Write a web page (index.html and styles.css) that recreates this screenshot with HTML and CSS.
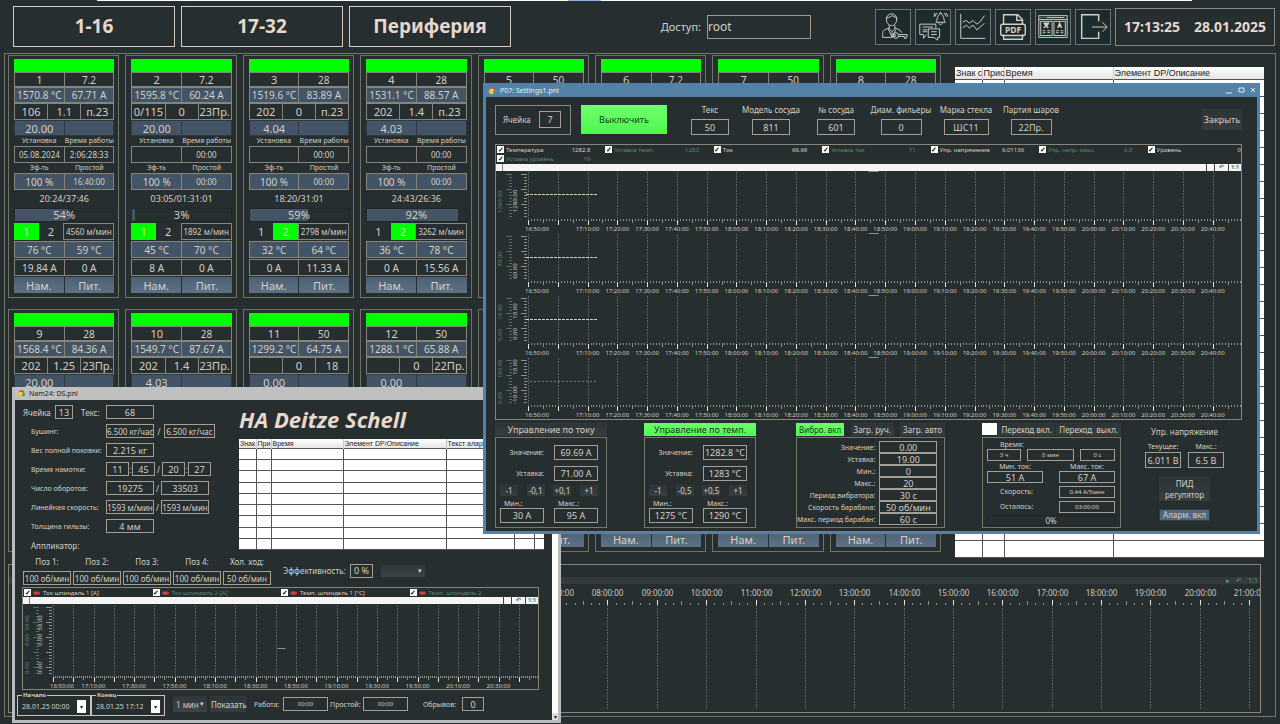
FILE: index.html
```html
<!DOCTYPE html>
<html lang="ru">
<head>
  <meta charset="UTF-8">
  <title>Периферия</title>
  <meta name="viewport" content="width=device-width, initial-scale=1.0">
  <link rel="stylesheet" href="styles.css">
</head>
<body>

  <div class="top-strip"></div>

  <header class="header">
    <nav class="pages">
      <button class="page-btn">1-16</button>
      <button class="page-btn">17-32</button>
      <button class="page-btn">Периферия</button>
    </nav>

    <div class="access">
      <label for="access">Доступ:</label>
      <input id="access" type="text" value="root">
    </div>

    <div class="tools">
      <button class="tool" aria-label="user">
        <svg viewBox="0 0 36 36">
          <path d="M11 10c0-8 11-8 11 0M11 8c3 1 5-2 6-2s3 2 5 2M11 9c0 10 11 10 11 0"/>
          <path d="M14 16v4l3 3 3-3v-4M14 19l-5 2c-2 1-2 3-2 8h10M20 19l5 2 2 3M13 20l4 9 4-8M17 23v5"/>
          <circle cx="21" cy="27" r="3"/><circle cx="20" cy="27" r="1"/>
          <path d="M24 26h9v2h-1v2h-2v-2h-6"/>
        </svg>
      </button>
      <button class="tool" aria-label="messages">
        <svg viewBox="0 0 36 36">
          <path d="M4 15h17v4M4 15v11h4v4l3-4M7 18h11M7 21h5M7 23h5"/>
          <path d="M13 20h12v9h-2v3l-4-3h-6zM16 23h6M16 26h6"/>
          <path d="M21 13c2-2 1-8 5-9 4 1 3 7 5 9zM25 4c0-2 2-2 2 0M24 14c1 2 3 2 4 0M22 3l-2 4M20 3l-1 4M30 3l2 4M32 3l2 4"/>
        </svg>
      </button>
      <button class="tool" aria-label="trends">
        <svg viewBox="0 0 36 36">
          <path d="M5 4v26h26"/>
          <path d="M7 13l4-2 3 3 4-3 4 4 4-3 4-6M7 19l4-3 3 3 4-3 4 5 4-3 4-4"/>
        </svg>
      </button>
      <button class="tool" aria-label="pdf">
        <svg viewBox="0 0 36 36">
          <path class="thick" d="M8 15V5h15l5 5v5M22 5v6h6M8 26v5h20v-5"/>
          <rect class="thick" x="5" y="15" width="26" height="12" rx="2"/>
          <text x="18" y="24">PDF</text>
        </svg>
      </button>
      <button class="tool" aria-label="language">
        <svg viewBox="0 0 36 36">
          <rect x="3" y="6" width="30" height="23"/>
          <path d="M3 10h30M5 8h1M8 8h1M11 8h19"/>
          <rect x="5" y="12" width="12" height="15"/><rect x="19" y="12" width="12" height="15"/>
          <path class="thick" d="M8 14h6M11 14v2M13 15l-5 4M9 15l4 4M23 19l2-5 2 5M24 17h3"/>
          <path d="M7 22h3M12 22h3M7 24h3M12 24h3M21 22h3M26 22h3M21 24h3M26 24h3"/>
        </svg>
      </button>
      <button class="tool" aria-label="exit">
        <svg viewBox="0 0 36 36">
          <path class="thick" d="M24 12V5H6v25h18v-7"/>
          <path d="M17 18h16M28 13l5 5-5 5"/>
        </svg>
      </button>
    </div>

    <div class="clock"><span>17:13:25</span><span>28.01.2025</span></div>
  </header>

  <main class="frame">
    <div class="overview">
      <div class="cards" id="cards"></div>
      <table class="alarms alarms-main">
        <colgroup><col class="c26"><col class="c22"><col class="c109"><col></colgroup>
        <thead>
          <tr><th>Знак с</th><th>Прио</th><th>Время</th><th>Элемент DP/Описание</th></tr>
        </thead>
        <tbody data-rows="28" data-cols="4"></tbody>
      </table>
    </div>

    <section class="history">
      <div class="history-bar"><i>▸</i><i>↶</i><i>1:1</i></div>
      <svg class="plot" data-plot="history"></svg>
    </section>
  </main>

  <!-- Winding panel -->
  <section class="window win-wind">
    <div class="title-bar">
      <svg class="logo" viewBox="0 0 10 10"><circle class="l1" cx="5" cy="4" r="3"/><circle class="l2" cx="4" cy="6" r="3"/><circle class="l3" cx="7" cy="6" r="2"/><circle class="l4" cx="5" cy="5" r="1"/></svg>
      <span>Nam24: DS.pnl</span>
    </div>
    <div class="wind-body">
      <div class="wind-content">
        <div class="wind-top">
          <form class="wind-form">
            <div class="line line-first">
              <label for="w-cell">Ячейка</label><input id="w-cell" class="box w18" value="13">
              <label for="w-tex" class="tex">Текс:</label><input id="w-tex" class="box w48" value="68">
            </div>
            <div class="line"><label for="w-bush">Бушинг:</label><input id="w-bush" class="box small w48" value="6.500 кг/час"><span class="sep wide">/</span><input class="box small w51" aria-label="Бушинг" value="6.500 кг/час"></div>
            <div class="line"><label for="w-weight">Вес полной поковки:</label><input id="w-weight" class="box w48" value="2.215 кг"></div>
            <div class="line"><label for="w-time">Время намотки:</label><input id="w-time" class="box w23" value="11"><span class="colon">:</span><input class="box w23" aria-label="мин" value="45"><span class="sep">/</span><input class="box w23" aria-label="ч" value="20"><span class="colon">:</span><input class="box w23" aria-label="мин" value="27"></div>
            <div class="line"><label for="w-turns">Число оборотов:</label><input id="w-turns" class="box w48" value="19275"><span class="sep">/</span><input class="box w48" aria-label="Число оборотов" value="33503"></div>
            <div class="line"><label for="w-speed">Линейная скорость:</label><input id="w-speed" class="box small w48" value="1593 м/мин"><span class="sep">/</span><input class="box small w48" aria-label="Линейная скорость" value="1593 м/мин"></div>
            <div class="line"><label for="w-thick">Толщина гильзы:</label><input id="w-thick" class="box w48" value="4 мм"></div>
            <div class="line applicator">Аппликатор:</div>
          </form>
          <div class="wind-alarms">
            <h1>HA Deitze Schell</h1>
            <table class="alarms alarms-small">
              <colgroup><col class="c17"><col class="c15"><col class="c72"><col class="c103"><col class="c68"><col class="c20"><col></colgroup>
              <thead>
                <tr><th>Знак</th><th>При</th><th>Время</th><th>Элемент DP/Описание</th><th>Текст аларма</th><th></th><th></th></tr>
              </thead>
              <tbody data-rows="9" data-cols="7"></tbody>
            </table>
          </div>
        </div>

        <div class="positions">
          <div class="pos-grid">
            <label>Поз 1:<input class="box small" value="100 об/мин"></label>
            <label>Поз 2:<input class="box small" value="100 об/мин"></label>
            <label>Поз 3:<input class="box small" value="100 об/мин"></label>
            <label>Поз 4:<input class="box small" value="100 об/мин"></label>
            <label>Хол. ход:<input class="box small" value="50 об/мин"></label>
          </div>
          <label for="w-eff" class="eff">Эффективность:</label>
          <input id="w-eff" class="box w23" value="0 %">
          <span class="pick"><select aria-label="Режим"><option></option></select></span>
        </div>

        <div class="trend trend-wind">
          <div class="legend legend-wind">
            <label><input type="checkbox" checked><b>⚮</b>Ток шпиндель 1 [A]</label>
            <label class="dim"><input type="checkbox" checked><b>⚮</b>Ток шпиндель 2 [A]</label>
            <label><input type="checkbox" checked><b>⚮</b>Темп. шпиндель 1 [°C]</label>
            <label class="dim"><input type="checkbox" checked><b>⚮</b>Темп. шпиндель 2</label>
          </div>
          <div class="scroll-strip"><i></i><i></i><i>↶</i><i>1:1</i></div>
          <svg class="plot plot-wind" data-plot="wind"></svg>
        </div>

        <div class="wind-foot">
          <fieldset><legend>Начало</legend><input aria-label="Начало" value="28.01.25 00:00"><button type="button" aria-label="Выбрать начало">▾</button></fieldset>
          <fieldset><legend>Конец</legend><input aria-label="Конец" value="28.01.25 17:12"><button type="button" aria-label="Выбрать конец">▾</button></fieldset>
          <span class="pick pick-step"><select aria-label="Интервал"><option>1 мин</option></select></span>
          <button type="button" class="btn show">Показать</button>
          <label for="w-work">Работа:</label><input id="w-work" class="box w45" value="00:00">
          <label for="w-idle">Простой:</label><input id="w-idle" class="box w45" value="00:00">
          <label for="w-breaks" class="breaks">Обрывов:</label><input id="w-breaks" class="box w22" value="0">
        </div>
      </div>
      <div class="scrollbar"><button type="button" aria-label="Вниз">▾</button></div>
    </div>
  </section>

  <!-- Heating settings panel -->
  <section class="window win-settings">
    <div class="title-bar">
      <svg class="logo" viewBox="0 0 10 10"><circle class="l1" cx="5" cy="4" r="3"/><circle class="l2" cx="4" cy="6" r="3"/><circle class="l3" cx="7" cy="6" r="2"/><circle class="l4" cx="5" cy="5" r="1"/></svg>
      <span>P07: Settings1.pnl</span>
      <div class="win-buttons">
        <button aria-label="Свернуть"><svg viewBox="0 0 8 8"><path d="M1 7h6"/></svg></button>
        <button aria-label="Развернуть"><svg viewBox="0 0 8 8"><path d="M2 2h5v4H2z"/></svg></button>
        <button aria-label="Закрыть окно"><svg viewBox="0 0 8 8"><path d="M2 2l4 4M6 2L2 6"/></svg></button>
      </div>
    </div>
    <div class="set-body">
      <div class="set-head">
        <div class="cell-no"><label for="s-cell">Ячейка</label><input id="s-cell" class="box" value="7"></div>
        <button class="off-btn">Выключить</button>
        <div class="params">
          <label>Текс<input class="box w38" value="50"></label>
          <label>Модель сосуда<input class="box w38" value="811"></label>
          <label>№ сосуда<input class="box w38" value="601"></label>
          <label>Диам. фильеры<input class="box w41" value="0"></label>
          <label>Марка стекла<input class="box w45" value="ШС11"></label>
          <label>Партия шаров<input class="box w41" value="22Пр."></label>
        </div>
        <button class="btn close-btn">Закрыть</button>
      </div>

      <div class="trend">
        <div class="legend legend-set">
          <label><input type="checkbox" checked>Температура<span>1282.8</span></label>
          <label class="dim"><input type="checkbox" checked>Уставка темп.<span>1283</span></label>
          <label><input type="checkbox" checked>Ток<span>69.69</span></label>
          <label class="dim"><input type="checkbox" checked>Уставка ток<span>71</span></label>
          <label><input type="checkbox" checked>Упр. напряжение<span>6.01136</span></label>
          <label class="dim"><input type="checkbox" checked>Упр. напр. макс.<span>6.5</span></label>
          <label class="last"><input type="checkbox" checked>Уровень<span>0</span></label>
          <label class="dim"><input type="checkbox" checked>Уставка уровень<span>19</span></label>
        </div>
        <div class="scroll-strip"><i></i><i></i><i>↶</i><i>1:1</i></div>
        <svg class="plot plot-set" data-plot="temp"></svg>
        <svg class="plot plot-set" data-plot="current"></svg>
        <svg class="plot plot-set" data-plot="voltage"></svg>
        <svg class="plot plot-set" data-plot="level"></svg>
      </div>

      <div class="controls">
        <section class="control control-reg">
          <button class="btn head-btn">Управление по току</button>
          <div class="panel reg">
            <label for="c-val">Значение:</label><input id="c-val" class="box" value="69.69 A">
            <label for="c-set">Уставка:</label><input id="c-set" class="box" value="71.00 A">
            <div class="steps"><button class="btn">-1</button><button class="btn">-0,1</button><button class="btn">+0,1</button><button class="btn">+1</button></div>
            <label class="limit">Мин.:<input class="box" value="30 A"></label>
            <label class="limit">Макс.:<input class="box" value="95 A"></label>
          </div>
        </section>

        <section class="control control-reg">
          <button class="btn head-btn on">Управление по темп.</button>
          <div class="panel reg">
            <label for="t-val">Значение:</label><input id="t-val" class="box" value="1282.8 °C">
            <label for="t-set">Уставка:</label><input id="t-set" class="box" value="1283 °C">
            <div class="steps"><button class="btn">-1</button><button class="btn">-0,5</button><button class="btn">+0,5</button><button class="btn">+1</button></div>
            <label class="limit">Мин.:<input class="box" value="1275 °C"></label>
            <label class="limit">Макс.:<input class="box" value="1290 °C"></label>
          </div>
        </section>

        <section class="control control-vibro">
          <div class="head-row"><button class="btn on">Вибро. вкл</button><button class="btn">Загр. руч.</button><button class="btn">Загр. авто</button></div>
          <div class="panel vibro">
            <label for="v1">Значение:</label><input id="v1" class="box" value="0.00">
            <label for="v2">Уставка:</label><input id="v2" class="box" value="19.00">
            <label for="v3">Мин.:</label><input id="v3" class="box" value="0">
            <label for="v4">Макс.:</label><input id="v4" class="box" value="20">
            <label for="v5">Период вибратора:</label><input id="v5" class="box" value="30 с">
            <label for="v6">Скорость барабана:</label><input id="v6" class="box" value="50 об/мин">
            <label for="v7">Макс. период барабан:</label><input id="v7" class="box" value="60 с">
          </div>
        </section>

        <section class="control control-ramp">
          <div class="head-row"><span class="lamp"></span><button class="btn">Переход вкл.</button><button class="btn">Переход&nbsp; выкл.</button></div>
          <div class="panel ramp">
            <label for="r-h">Время:</label>
            <div class="time"><input id="r-h" class="box" value="3 ч"><input class="box" aria-label="мин" value="0 мин"><input class="box" aria-label="с" value="0 с"></div>
            <div class="pair"><label>Мин. ток:<input class="box" value="51 A"></label><label>Макс. ток:<input class="box" value="67 A"></label></div>
            <div class="rate"><label for="r-speed">Скорость:</label><input id="r-speed" class="box" value="0.44 A/5мин"></div>
            <div class="rate"><label for="r-left">Осталось:</label><input id="r-left" class="box" value="03:00:00"></div>
            <div class="ramp-progress">0%</div>
          </div>
        </section>

        <section class="control-volt">
          <h2>Упр. напряжение</h2>
          <div class="volts"><label>Текущее:<input class="box" value="6.011 В"></label><label>Макс.:<input class="box" value="6.5 В"></label></div>
          <button class="btn pid">ПИД регулятор</button>
          <button class="btn alarm-on">Аларм. вкл</button>
        </section>
      </div>
    </div>
  </section>

  <script src="script.js"></script>
</body>
</html>
```
FILE: styles.css
```css
* { box-sizing: border-box; }

body {
  margin: 0;
  min-height: 100vh;
  display: flex;
  flex-direction: column;
  position: relative;
  overflow: hidden;
  background-color: #262e2f;
  color: #d6cec4;
  font-family: 'Noto Sans', sans-serif;
  font-size: 8px;
}

button, input, select {
  font: inherit;
  color: inherit;
  margin: 0;
  padding: 0;
  border: none;
  border-radius: 0;
  background: none;
  min-width: 0;
}

button { white-space: nowrap; cursor: pointer; }

.top-strip {
  height: 1px;
  margin: 0 88px 0 97px;
  background: linear-gradient(90deg, #fff 43%, #8db4dc 43%, #8db4dc 46%, #fff 46%);
}

/* Header */
.header {
  display: flex;
  align-items: center;
  padding: 5px 5px 6px 13px;
}

.pages { display: flex; gap: 6px; }

.page-btn {
  width: 162px;
  height: 41px;
  border: 1px solid #d9cbbf;
  color: #e6d8cd;
  font-size: 19px;
  font-weight: bold;
  line-height: 37px;
}

.access {
  display: flex;
  align-items: center;
  gap: 6px;
  margin: 0 64px 0 auto;
  font-size: 12px;
}

.access label { font-size: 11px; }

.access input {
  width: 104px;
  height: 24px;
  border: 1px solid #a09c95;
}

.tools { display: flex; gap: 4px; margin-right: 4px; }

.tool {
  width: 36px;
  height: 36px;
  border: 1px solid #6d7474;
  background-color: #1c2c2e;
}

.tool svg { display: block; width: 34px; height: 34px; }
.tool path, .tool rect, .tool circle { fill: none; stroke: #d6cec4; stroke-width: 1; }
.tool .thick { stroke-width: 1.5; }
.tool text { fill: #d6cec4; font-size: 9px; font-weight: bold; text-anchor: middle; }

.clock {
  display: flex;
  align-items: center;
  justify-content: center;
  gap: 14px;
  width: 160px;
  height: 38px;
  border: 1px solid #8b8880;
  color: #e6d8cd;
  font-size: 14px;
  font-weight: bold;
}

/* Main frame */
.frame {
  flex: 1;
  display: flex;
  flex-direction: column;
  margin: 0 4px 7px;
  padding: 1px 11px 3px 3px;
  border: 1px solid #73776d;
}

.overview {
  display: grid;
  grid-template-columns: minmax(0, 933fr) minmax(0, 309fr);
  gap: 14px;
  align-items: start;
}

.cards {
  display: grid;
  grid-template-columns: repeat(8, minmax(0, 1fr));
  gap: 11px 6px;
}

.card {
  display: flex;
  flex-direction: column;
  padding: 3px 4px 4px 5px;
  border: 1px solid #6c7564;
  text-align: center;
}

.state { height: 13px; background-color: #0f0; }

.row { display: flex; height: 17px; font-size: 10px; }

.row > * {
  flex: 1 1 0;
  min-width: 0;
  display: flex;
  align-items: center;
  justify-content: center;
  border: 1px solid #85857b;
  white-space: nowrap;
  overflow: hidden;
}

.row > * + * { border-left: none; }
.row-id { height: 15px; }
.row-id :first-child { font-size: 11px; }
.row-power { height: 16px; }
.row-glass { font-size: 11px; }
.blue > * { background-color: #425466; }
.row-level { height: 16px; font-size: 11px; }
.row-level > * { border-color: #2c3842; }
.captions { display: flex; height: 10px; align-items: center; font-size: 7px; line-height: 10px; }
.captions span { flex: 1 1 0; white-space: nowrap; }
.row-small { font-size: 8px; }
.row-eff :last-child { font-size: 8px; }
.elapsed { height: 18px; line-height: 18px; font-size: 9px; }

.progress {
  position: relative;
  height: 14px;
  margin-bottom: 1px;
  border: 1px solid #1f2728;
  font-size: 11px;
  line-height: 12px;
}

.progress div { position: absolute; top: 0; bottom: 0; left: 0; background-color: #425466; }
.progress span { position: relative; }

.row-spin { margin-bottom: 1px; font-size: 11px; }
.row-spin .spindle { flex: 1; border: none; }
.row-spin .spindle.active { background-color: #0f0; }
.row-spin .speed { flex: 2; border: 1px solid #85857b; font-size: 8px; }
.row-temp, .row-amps { margin-bottom: 1px; }

.card-buttons { display: flex; height: 16px; gap: 1px; }
.card-buttons button {
  flex: 1;
  background: linear-gradient(#4d6073, #5d7287);
  font-size: 11px;
  line-height: 15px;
}

/* Alarm tables */
.alarms {
  width: 100%;
  table-layout: fixed;
  border-collapse: collapse;
  background-color: #fff;
  color: #222;
}

.alarms th {
  padding: 0 0 0 1px;
  border-right: 1px solid #ccc;
  font-weight: normal;
  text-align: left;
  white-space: nowrap;
  overflow: hidden;
  background: linear-gradient(#fff, #e4e4e4);
}

.alarms td { padding: 0; border: 1px solid #555; border-width: 1px 1px 1px 0; }
.alarms th:last-child, .alarms td:last-child { border-right: none; }
.alarms-main { height: 491px; margin-top: 12px; font-family: 'Liberation Sans', sans-serif; font-size: 9px; }
.alarms-main th { height: 12px; line-height: 12px; }
.alarms-small { height: 111px; font-family: 'Liberation Sans', sans-serif; font-size: 7px; }
.alarms-small th { height: 9px; line-height: 9px; }
.c26 { width: 27px; } .c22 { width: 22px; } .c109 { width: 109px; }
.c17 { width: 17px; } .c15 { width: 15px; } .c72 { width: 72px; }
.c103 { width: 103px; } .c68 { width: 68px; } .c20 { width: 20px; }

/* Trends */
.history {
  flex: 1;
  display: flex;
  flex-direction: column;
  min-height: 149px;
  margin: 6px 3px 0 0;
  padding-top: 12px;
  border: 1px solid #85857b;
}

.history-bar {
  display: flex;
  justify-content: flex-end;
  gap: 6px;
  height: 7px;
  padding-right: 2px;
  background-color: #343b3d;
  color: #4aa394;
  line-height: 7px;
}

.history-bar i { font-style: normal; font-size: 7px; }

.plot { display: block; width: 100%; overflow: hidden; }
.history .plot { flex: 1 1 0; height: 0; min-height: 0; }
.plot text { fill: #cfc8be; font-size: 6px; text-anchor: middle; }
.plot .big { font-size: 8px; }
.plot .green { fill: #5b8872; }
.plot .grid { stroke: #566060; stroke-width: 1; stroke-dasharray: 2 1; }
.plot .tick { stroke: #8f8f88; stroke-width: 1; }
.plot .major { stroke: #ebe4da; stroke-width: 1; }
.plot .gtick { stroke: #4e6f5f; stroke-width: 1; }
.plot .curve { stroke: #d9d6b8; stroke-width: 1; stroke-dasharray: 3 1; }
.plot .faint { stroke: #777d78; stroke-dasharray: 2 2; }

.trend { border: 1px solid #85857b; }
.trend-wind { margin: 0 5px; }

.legend { display: grid; font-size: 6px; }
.legend label { display: flex; align-items: center; white-space: nowrap; }
.legend span { margin-left: auto; padding-right: 15px; }
.legend .last span { padding-right: 0; }
.legend .dim { color: #5b8872; }
.legend b { color: #e04848; font-size: 8px; line-height: 8px; margin-right: 3px; }
.legend-wind { grid-template-columns: repeat(4, 131fr); height: 9px; padding-left: 1px; }
.legend-set { grid-template-columns: repeat(6, 109fr) 94fr; grid-auto-rows: 9px; padding: 0 0 1px 1px; }

.legend input {
  appearance: none;
  flex: none;
  width: 7px;
  height: 7px;
  margin-right: 2px;
  background-color: #fff;
}

.legend input:checked::before {
  content: "✓";
  display: block;
  color: #111;
  font-size: 7px;
  font-weight: bold;
  line-height: 7px;
  text-align: center;
}

.scroll-strip {
  display: flex;
  justify-content: flex-end;
  gap: 1px;
  height: 7px;
  background-color: #f5f5f5;
  color: #2f8f80;
  font-size: 6px;
  font-weight: bold;
  line-height: 7px;
}

.scroll-strip i { width: 13px; border-left: 1px solid #444; font-style: normal; text-align: center; }
.scroll-strip i:first-child { width: 7px; margin-right: auto; border-left: none; border-right: 1px solid #888; }
.scroll-strip i:nth-child(2) { width: 7px; }

/* Windows */
.window { position: absolute; background-color: #262e2f; }
.title-bar { display: flex; align-items: center; gap: 3px; font-size: 7px; }
.logo { width: 9px; height: 9px; margin-left: 2px; }
.l1 { fill: #d6503c; } .l2 { fill: #efc53c; } .l3 { fill: #4fa05a; } .l4 { fill: #f7efc0; }

.box {
  height: 14px;
  border: 1px solid #a39f96;
  text-align: center;
  font-size: 9px;
}

.box.small { font-size: 8px; }

.btn { background: linear-gradient(#2d3436, #383e40); border: 1px solid #323a3b; }
.btn.on { background: linear-gradient(#6dff6d, #4cf84c); border-color: #5fff5f; color: #1d3a1f; }

.w18 { width: 18px; } .w22 { width: 22px; } .w23 { width: 23px; } .w38 { width: 38px; }
.w41 { width: 41px; } .w45 { width: 45px; } .w48 { width: 48px; } .w51 { width: 51px; }

/* Winding window */
.win-wind {
  left: 12px;
  top: 387px;
  width: 549px;
  border: 3px solid #b8bcbe;
  border-top: none;
}

.win-wind .title-bar { height: 13px; background-color: #c0c0c0; color: #222; }
.wind-body { display: flex; }
.wind-content { flex: 1; min-width: 0; padding: 0 8px 4px 2px; }

.scrollbar { display: flex; align-items: flex-end; width: 6px; background-color: #fff; }
.scrollbar button { width: 6px; height: 7px; background-color: #ddd; color: #222; font-size: 6px; line-height: 6px; }

.wind-top { display: flex; justify-content: space-between; padding-left: 6px; }
.wind-form { display: flex; flex-direction: column; gap: 5px; padding-top: 5px; }
.line { display: flex; align-items: center; height: 14px; padding-left: 8px; white-space: nowrap; }
.line > label:first-child { width: 75px; font-size: 7px; }
.line-first { padding-left: 0; }
.line-first > label:first-child { width: 32px; font-size: 8px; }
.line .tex { width: 33px; padding-left: 8px; }
.sep { width: 7px; text-align: center; }
.sep.wide { width: 10px; }
.colon { width: 3px; text-align: center; }

.wind-alarms { width: 305px; }
.wind-alarms h1 {
  margin: 0;
  height: 39px;
  color: #e6d8cd;
  font-size: 22px;
  font-style: italic;
  line-height: 38px;
}

.positions { display: flex; align-items: center; padding: 4px 0 2px 6px; }
.pos-grid { display: grid; grid-template-columns: repeat(5, 48px); gap: 2px; margin-right: 12px; }
.pos-grid label { display: flex; flex-direction: column; align-items: center; line-height: 12px; }
.pos-grid .box { width: 100%; margin-top: 3px; }
.eff { width: 63px; }
.positions > .box { margin: 0 8px 0 4px; }

.pick { position: relative; display: flex; width: 44px; height: 12px; }
.pick select { appearance: none; width: 100%; padding: 0 8px 0 3px; background: linear-gradient(#30373a, #3c4346); }
.pick::after { content: "▾"; position: absolute; right: 3px; top: 0; line-height: 12px; font-size: 7px; }

.plot-wind { height: 85px; }

.wind-foot { display: flex; align-items: center; padding-top: 2px; }
.wind-foot fieldset {
  display: flex;
  align-items: center;
  width: 74px;
  height: 24px;
  margin: 0;
  padding: 0 4px;
  border: 1px solid #c9c2b8;
  min-width: 0;
}

.wind-foot legend { padding: 0 1px; font-size: 6px; line-height: 6px; font-weight: bold; }
.wind-foot fieldset input { width: 56px; font-size: 7px; height: 14px; }
.wind-foot fieldset button { width: 9px; height: 13px; background-color: #fff; color: #222; font-size: 6px; }
.wind-foot .pick-step { width: 34px; height: 16px; margin: 0 3px 0 8px; }
.pick-step::after { line-height: 16px; }
.show { width: 36px; height: 16px; margin-right: 7px; }
.wind-foot > label { width: 29px; margin-left: 1px; white-space: nowrap; font-size: 7px; }
.wind-foot .w45 { font-size: 6px; margin-right: 1px; }
.wind-foot #w-work + label { width: 33px; }
.wind-foot .breaks { width: 39px; margin-left: 14px; }

/* Settings window */
.win-settings {
  left: 483px;
  top: 83px;
  width: 777px;
  border: 3px solid #4f82ad;
  border-top: none;
}

.win-settings .title-bar { height: 14px; background-color: #5482a6; color: #e8eef2; }
.win-buttons { display: flex; gap: 4px; margin-left: auto; }
.win-buttons svg { display: block; width: 8px; height: 8px; fill: none; stroke: #dfe8ee; }

.set-body { padding: 7px 15px 3px 9px; }
.set-head { display: flex; align-items: center; margin-bottom: 9px; }

.cell-no {
  display: flex;
  align-items: center;
  justify-content: space-between;
  width: 76px;
  height: 30px;
  padding: 0 9px 0 7px;
  border: 1px solid #8b8880;
  font-size: 8px;
}

.cell-no .box { width: 22px; height: 17px; }
.off-btn { width: 86px; height: 29px; margin-left: 10px; background: linear-gradient(#70ff70, #4cf84c); color: #1d3a1f; font-size: 9px; }

.params { display: flex; gap: 5px; margin-left: 17px; }
.params label {
  display: flex;
  flex-direction: column;
  align-items: center;
  width: 60px;
  font-size: 8px;
  line-height: 12px;
  white-space: nowrap;
}
.params label:first-child { width: 52px; }
.params .box { height: 16px; margin-top: 3px; }
.close-btn { width: 40px; height: 21px; margin-left: auto; font-size: 9px; }

.plot-set { height: 62px; }

.controls {
  display: grid;
  grid-template-columns: 149px 152px 186px 139px 1fr;
  padding-top: 3px;
}

.control-reg { width: 112px; }
.control-vibro { width: 149px; }
.controls .head-btn { display: block; width: 100%; height: 13px; font-size: 9px; line-height: 11px; }
.panel { height: 91px; margin-top: 1px; border: 1px solid #73776d; }

.reg {
  display: grid;
  grid-template-columns: 44px 44px;
  gap: 4px 10px;
  align-content: start;
  padding: 7px 4px 0;
  align-items: center;
  font-size: 7px;
}

.reg > label { text-align: right; }
.reg .box { height: 15px; width: 44px; }
.reg > label:nth-of-type(2), .reg > input:nth-of-type(2) { margin-top: 2px; }
.steps { grid-column: 1 / -1; display: flex; justify-content: space-between; }
.steps .btn { width: 18px; height: 11px; font-size: 8px; line-height: 9px; }
.reg > .limit { display: flex; flex-direction: column; text-align: left; line-height: 8px; text-indent: 4px; }
.limit .box { text-indent: 0; }

.head-row { display: flex; justify-content: space-between; height: 13px; }
.head-row .btn { height: 13px; padding: 0 2px; font-size: 8px; line-height: 11px; }

.vibro {
  display: grid;
  grid-template-columns: 1fr 58px;
  grid-auto-rows: 12px;
  column-gap: 4px;
  align-items: center;
  padding: 3px 9px 0 0;
  font-size: 7px;
}

.vibro label { text-align: right; white-space: nowrap; }
.vibro .box { height: 12px; }

.lamp { width: 15px; height: 12px; background-color: #fff; }

.ramp { padding: 3px 5px 0 4px; font-size: 7px; }
.ramp label { line-height: 8px; }
.ramp > label { display: block; padding-left: 13px; }
.time { display: grid; grid-template-columns: 34fr 47fr 35fr; gap: 6px; }
.ramp .box { width: 100%; height: 12px; }
.time .box, .rate .box { font-size: 6px; }
.pair { display: grid; grid-template-columns: 56px 56px; justify-content: space-between; padding-top: 2px; text-align: center; }
.rate { display: flex; align-items: center; justify-content: space-between; padding: 3px 0 0 13px; }
.ramp .rate .box { width: 56px; }
.ramp-progress { height: 11px; margin-top: 2px; border: 1px solid #1f2728; text-align: center; font-size: 8px; line-height: 10px; }

.control-volt { display: flex; flex-direction: column; align-items: center; padding-left: 6px; }
.control-volt h2 { margin: 3px 0 4px; font-size: 8px; font-weight: normal; line-height: 12px; }
.volts { display: flex; gap: 7px; }
.volts label { display: flex; flex-direction: column; align-items: center; font-size: 7px; line-height: 10px; }
.volts .box { width: 36px; height: 16px; }
.pid { width: 51px; height: 24px; margin: 9px 0 8px; font-size: 8px; line-height: 11px; white-space: normal; }
.alarm-on { width: 51px; height: 12px; background: #52687f; font-size: 8px; line-height: 10px; }
```
FILE: script.js
```js
// id, tex, temp, current, glass[3], level, installed, worked, eff, idle, elapsed, percent, spindle, speed, temps[2], amps[2]
const cells = [
  ['1', '7.2', '1570.8 °C', '67.71 A', ['106', '1.1', 'п.23'], '20.00', '05.08.2024', '2:06:28:33', '100 %', '16:40:00', '20:24/37:46', 54, 1, '4560 м/мин', ['76 °C', '59 °C'], ['19.84 A', '0 A']],
  ['2', '7.2', '1595.8 °C', '60.24 A', ['0/115', '0', '23Пр.'], '20.00', '', '00:00', '100 %', '00:00', '03:05/01:31:01', 3, 1, '1892 м/мин', ['45 °C', '70 °C'], ['8 A', '0 A']],
  ['3', '28', '1519.6 °C', '83.89 A', ['202', '0', 'п.23'], '4.04', '', '00:00', '100 %', '00:00', '18:20/31:01', 59, 2, '2798 м/мин', ['32 °C', '64 °C'], ['0 A', '11.33 A']],
  ['4', '28', '1531.1 °C', '88.57 A', ['202', '1.4', 'п.23'], '4.03', '', '00:00', '100 %', '00:00', '24:43/26:36', 92, 2, '3262 м/мин', ['36 °C', '78 °C'], ['0 A', '15.56 A']],
  ['5', '50'],
  ['6', '7.2'],
  ['7', '50'],
  ['8', '28'],
  ['9', '28', '1568.4 °C', '84.36 A', ['202', '1.25', '23Пр.'], '20.00'],
  ['10', '28', '1549.7 °C', '87.67 A', ['202', '1.4', '23Пр.'], '4.03'],
  ['11', '50', '1299.2 °C', '64.75 A', ['', '0', '18'], '0.00'],
  ['12', '50', '1288.1 °C', '65.88 A', ['', '0', '22Пр.'], '0.00'],
  ['13'], ['14'], ['15'], ['16']
];

function row(cls, values) {
  return `<div class="row ${cls}">${values.map(v => `<span>${v ?? ''}</span>`).join('')}</div>`;
}

function card(c) {
  const [id, tex, temp, cur, glass = ['', '', ''], level, inst, work, eff, idle, elapsed, pct = 0, sp, speed, temps = ['', ''], amps = ['', '']] = c;
  return `<article class="card">
    <div class="state"></div>
    ${row('row-id', [id, tex])}
    ${row('row-power blue', [temp, cur])}
    ${row('row-glass', glass)}
    ${row('row-level blue', [level, ''])}
    <div class="captions"><span>Установка</span><span>Время работы</span></div>
    ${row('row-small', [inst, work])}
    <div class="captions"><span>Эф-ть</span><span>Простой</span></div>
    ${row('row-eff blue', [eff, idle])}
    <div class="elapsed">${elapsed ?? ''}</div>
    <div class="progress"><div style="width: ${pct}%"></div><span>${pct}%</span></div>
    <div class="row row-spin">
      <span class="spindle ${sp === 1 ? 'active' : ''}">1</span>
      <span class="spindle ${sp === 2 ? 'active' : ''}">2</span>
      <span class="speed">${speed ?? ''}</span>
    </div>
    ${row('row-temp blue', temps)}
    ${row('row-amps', amps)}
    <div class="card-buttons"><button>Нам.</button><button>Пит.</button></div>
  </article>`;
}

document.getElementById('cards').innerHTML = cells.map(card).join('');

document.querySelectorAll('tbody[data-rows]').forEach(body => {
  const tr = `<tr>${'<td></td>'.repeat(body.dataset.cols)}</tr>`;
  body.innerHTML = tr.repeat(body.dataset.rows);
});

const line = (cls, x1, y1, x2, y2) => `<line class="${cls}" x1="${x1}" y1="${y1}" x2="${x2}" y2="${y2}"/>`;
const px = v => Math.round(v) + 0.5;

function time(minutes) {
  const h = String(Math.floor(minutes / 60)).padStart(2, '0');
  const m = String(minutes % 60).padStart(2, '0');
  return `${h}:${m}:00`;
}

// time axis starts at 16:50, one major tick per 10 minutes
function timeAxis(w, o) {
  const step = (w - o.x0) / 23.95;
  let s = '';
  for (let i = 0; o.x0 + i * step / 10 < w; i++) {
    const x = px(o.x0 + i * step / 10);
    if (i % 10 === 0) {
      s += line('grid', x, 1, x, o.base) + line('major', x, o.base + 1, x, o.base + 6);
    } else {
      s += line('tick', x, o.base, x, o.base + (i % 5 === 0 ? 4 : 2));
    }
  }
  for (let i = 0; i < 24; i += o.every) {
    if (i === 1) continue;
    const x = i === 0 ? o.x0 + 9 : o.x0 + i * step;
    s += `<text x="${x}" y="${o.labelY}">${time(1010 + i * 10)}</text>`;
  }
  return s;
}

// labels: [text, center y]
function valueAxis(x, cls, tick, labels, h) {
  let s = '';
  for (let i = 0, y = 3; y < h; y += 3, i++) {
    s += line(tick, x + (i % 5 ? 9 : 6), y + 0.5, x + 12, y + 0.5);
  }
  labels.forEach(([text, y]) => {
    s += `<text class="${cls}" transform="translate(${x + 2} ${y}) rotate(-90)">${text}</text>`;
  });
  return s;
}

const plots = {
  temp: { green: [['1280.00', 31]], white: [['1280.00', 30]], y: 24 },
  current: { green: [['70.00', 26]], white: [['60.00', 38]], y: 25 },
  voltage: { green: [['10.00', 17], ['0.00', 40]], white: [['10.00', 16], ['0.00', 39]], y: 25 },
  level: { green: [['100.00', 12], ['0.00', 41]], white: [['10.00', 10], ['-10.00', 38]], y: 25, faint: true }
};

function drawSettings(w, p) {
  return timeAxis(w, { x0: 32, base: 48, labelY: 60, every: 1 }) +
    valueAxis(4, 'green', 'gtick', p.green, 47) +
    valueAxis(19, '', 'tick', p.white, 47) +
    line('tick', w / 2, 0.5, w / 2 + 10, 0.5) +
    line(p.faint ? 'curve faint' : 'curve', 30, p.y - 0.5, 101, p.y - 0.5);
}

function drawWinding(w) {
  const labels = [['50.00', 19], ['0.00', 36], ['0.00', 64]];
  return timeAxis(w, { x0: 30, base: 72, labelY: 84, every: 2 }) +
    valueAxis(4, 'green', 'gtick', labels, 70) +
    valueAxis(17, '', 'tick', labels, 70) +
    line('tick', w / 2 - 3, 44.5, w / 2 + 5, 44.5);
}

// 21:00 sits close to the right border, one hour is 49 px wide at 1280
function drawHistory(w, h) {
  const step = w / 25.35;
  const last = w - 11;
  let s = '';
  for (let i = 0; i < 14; i++) {
    const x = px(last - i * step);
    s += line('grid', x, 21, x, h - 3) + line('major', x, 16, x, 21);
    s += `<text class="big" x="${x}" y="12">${time((21 - i) * 60)}</text>`;
    for (let k = 1; k < 6; k++) {
      const tx = px(last - (i + k / 6) * step);
      s += line('tick', tx, k === 3 ? 17 : 19, tx, 21);
    }
  }
  return s + `<text class="big" x="${last - 14 * step}" y="12">07:00:00</text>`;
}

function drawPlots() {
  document.querySelectorAll('.plot').forEach(svg => {
    const w = svg.clientWidth;
    const h = svg.clientHeight;
    const kind = svg.dataset.plot;
    if (kind === 'history') svg.innerHTML = drawHistory(w, h);
    else if (kind === 'wind') svg.innerHTML = drawWinding(w);
    else svg.innerHTML = drawSettings(w, plots[kind]);
  });
}

drawPlots();
window.addEventListener('resize', drawPlots);
```
